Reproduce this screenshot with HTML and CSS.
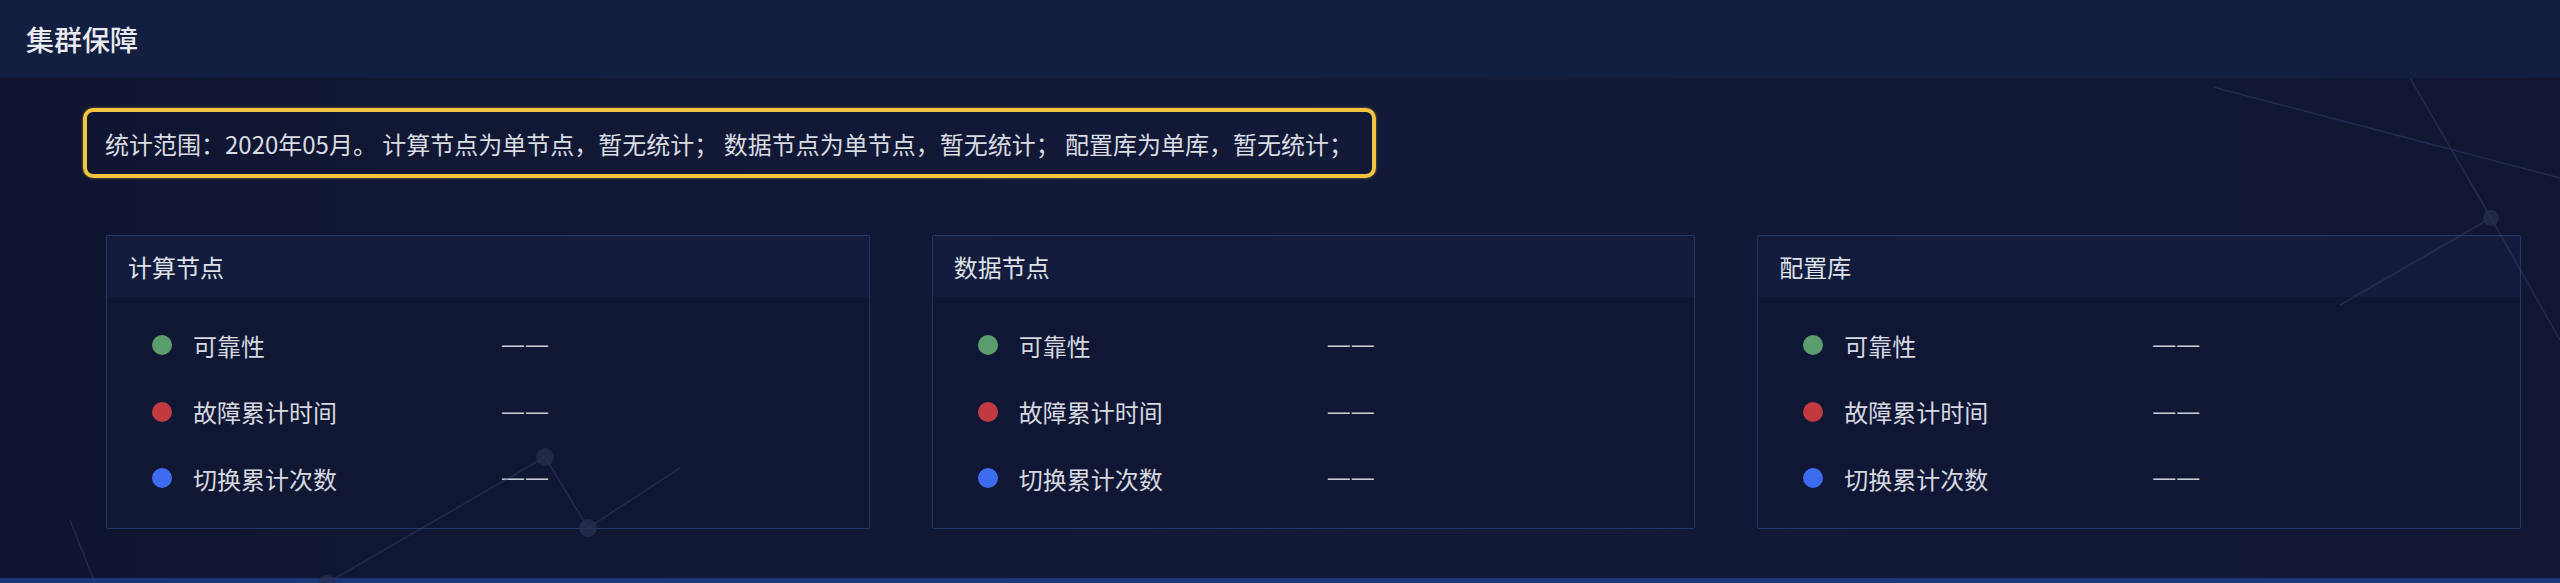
FILE: index.html
```html
<!DOCTYPE html>
<html lang="zh-CN">
<head>
<meta charset="utf-8">
<title>集群保障</title>
<link rel="stylesheet" href="styles.css">
</head>
<body>
<div class="page">
  <header class="header"><h1 class="title">集群保障</h1></header>
  <main class="content">
    <div class="notice">统计范围：2020年05月。 计算节点为单节点，暂无统计； 数据节点为单节点，暂无统计； 配置库为单库，暂无统计；</div>
    <div class="cards">
      <section class="card">
        <div class="card-head">计算节点</div>
        <div class="card-body">
          <div class="row"><span class="dot dot-green"></span><span class="label">可靠性</span><span class="value">——</span></div>
          <div class="row"><span class="dot dot-red"></span><span class="label">故障累计时间</span><span class="value">——</span></div>
          <div class="row"><span class="dot dot-blue"></span><span class="label">切换累计次数</span><span class="value">——</span></div>
        </div>
      </section>
      <section class="card">
        <div class="card-head">数据节点</div>
        <div class="card-body">
          <div class="row"><span class="dot dot-green"></span><span class="label">可靠性</span><span class="value">——</span></div>
          <div class="row"><span class="dot dot-red"></span><span class="label">故障累计时间</span><span class="value">——</span></div>
          <div class="row"><span class="dot dot-blue"></span><span class="label">切换累计次数</span><span class="value">——</span></div>
        </div>
      </section>
      <section class="card">
        <div class="card-head">配置库</div>
        <div class="card-body">
          <div class="row"><span class="dot dot-green"></span><span class="label">可靠性</span><span class="value">——</span></div>
          <div class="row"><span class="dot dot-red"></span><span class="label">故障累计时间</span><span class="value">——</span></div>
          <div class="row"><span class="dot dot-blue"></span><span class="label">切换累计次数</span><span class="value">——</span></div>
        </div>
      </section>
    </div>
  </main>
  <div class="footer-line"></div>
  <svg class="network" width="2560" height="583" viewBox="0 0 2560 583" aria-hidden="true">
    <g stroke="#3a4a78" stroke-width="1.5" fill="none" opacity="0.4">
      <line x1="2410" y1="78" x2="2491" y2="218"/>
      <line x1="2491" y1="218" x2="2560" y2="340"/>
      <line x1="2213" y1="87" x2="2560" y2="178"/>
      <line x1="2491" y1="218" x2="2340" y2="305"/>
      <line x1="545" y1="457" x2="588" y2="528"/>
      <line x1="545" y1="457" x2="327" y2="583"/>
      <line x1="588" y1="528" x2="680" y2="468"/>
      <line x1="70" y1="520" x2="95" y2="583"/>
    </g>
    <g fill="#27304f" opacity="0.75">
      <circle cx="2491" cy="218" r="8"/>
      <circle cx="545" cy="457" r="9"/>
      <circle cx="588" cy="528" r="9"/>
      <circle cx="327" cy="583" r="8"/>
    </g>
  </svg>
</div>
</body>
</html>
```
FILE: styles.css
```css
* { box-sizing: border-box; }

html, body {
  margin: 0;
  padding: 0;
}

body {
  width: 2560px;
  height: 583px;
  overflow: hidden;
  background: #111733;
  font-family: "Noto Sans CJK SC", "Noto Sans", sans-serif;
  color: #d6d9e0;
}

.page {
  position: relative;
  width: 2560px;
  height: 583px;
  display: flex;
  flex-direction: column;
  background: linear-gradient(90deg, #0f1530 0%, #111834 20%, #121a38 60%, #111733 100%);
}

.header {
  height: 78px;
  flex: none;
  display: flex;
  align-items: center;
  padding-left: 26px;
  background: #131f41;
}

.title {
  margin: 0;
  font-size: 28px;
  font-weight: 500;
  color: #e8eaf0;
}

.content {
  flex: 1;
  padding: 30px 39px 0 83px;
}

.notice {
  width: fit-content;
  height: 70px;
  display: flex;
  align-items: center;
  padding: 0 19px 0 18px;
  border: 4px solid #f2c440;
  border-radius: 10px;
  box-shadow: 0 0 3px rgba(242, 196, 64, 0.5);
  font-size: 24px;
  letter-spacing: 0;
  color: #d9dce3;
  white-space: pre;
}

.cards {
  margin: 57px 0 0 23px;
  display: grid;
  grid-template-columns: repeat(3, 1fr);
  column-gap: 62px;
}

.card {
  height: 294px;
  border: 1.5px solid #1f3868;
  border-radius: 2px;
  background: rgba(17, 24, 52, 0.85);
}

.card-head {
  height: 61px;
  display: flex;
  align-items: center;
  padding-left: 21px;
  background: #131c3c;
  font-size: 24px;
  color: #dfe2e8;
}

.card-body {
  padding-top: 15px;
}

.row {
  height: 66.5px;
  display: flex;
  align-items: center;
  padding-left: 45px;
  font-size: 24px;
}

.dot {
  flex: none;
  width: 20px;
  height: 20px;
  border-radius: 50%;
}

.dot-green { background: #5b9e6d; }
.dot-red { background: #c03a40; }
.dot-blue { background: #3d6cf0; }

.label {
  flex: none;
  width: 309px;
  margin-left: 21px;
  color: #d6d9e0;
}

.value {
  font-family: "Liberation Sans", "Noto Sans CJK SC", sans-serif;
  font-size: 22px;
  letter-spacing: 2px;
  color: #c9ccd4;
}

.footer-line {
  height: 5px;
  flex: none;
  background: #1c3776;
}

.network {
  position: absolute;
  left: 0;
  top: 0;
  pointer-events: none;
}
```
